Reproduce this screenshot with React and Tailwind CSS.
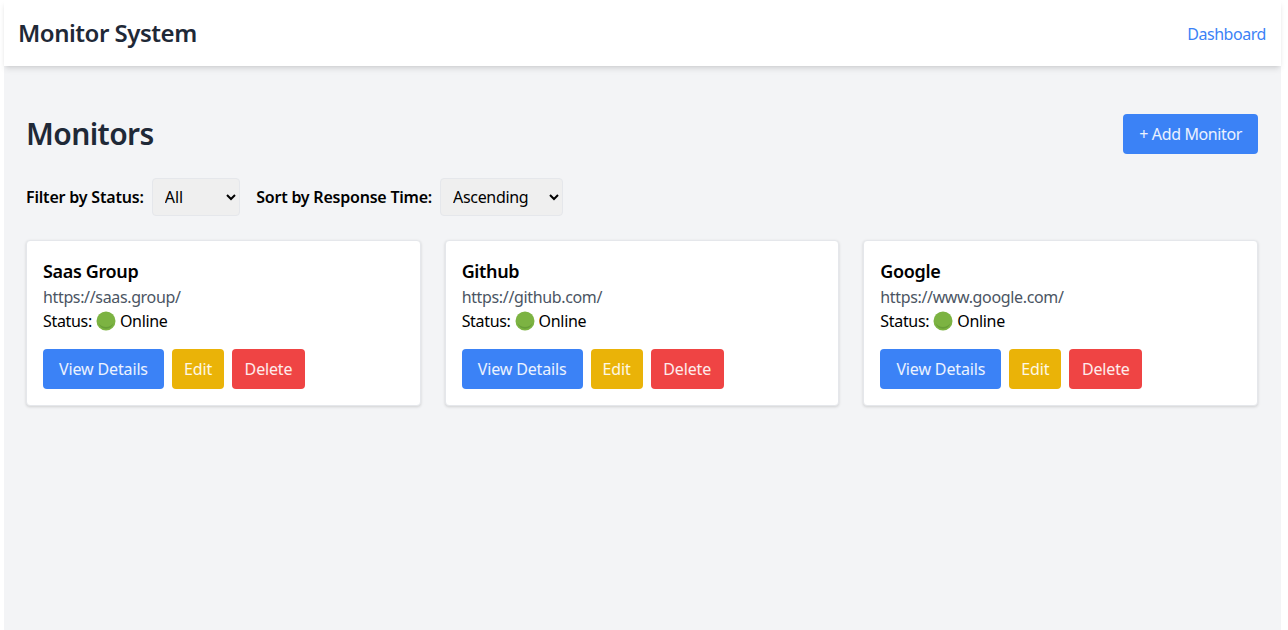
import React from "react";

const monitors = [
  { name: "Saas Group", url: "https://saas.group/" },
  { name: "Github", url: "https://github.com/" },
  { name: "Google", url: "https://www.google.com/" },
];

const StatusDot = () => (
  <svg width="20" height="20" viewBox="0 0 20 20" className="inline-block align-[-4px] ml-[4px] mr-[4px]">
    <circle cx="10" cy="10" r="9.5" fill="#7cb342" />
    <path d="M2.5 12a7.8 7.8 0 0 0 15 0a9 9 0 0 1-15 0z" fill="#689f38" />
  </svg>
);

const MonitorCard = ({ monitor }) => (
  <div className="bg-white rounded-[4px] border border-[#e5e7eb] shadow-[0_1px_3px_rgba(0,0,0,0.15)] p-4 h-[166px]">
    <h2 className="text-lg leading-[28px] font-semibold text-black tracking-[-0.02em]">{monitor.name}</h2>
    <p className="text-base leading-6 text-[#4b5563] tracking-[-0.022em]">{monitor.url}</p>
    <p className="text-base leading-6 text-black tracking-[-0.02em]">
      Status:
      <StatusDot />
      Online
    </p>
    <div className="flex gap-2 mt-4 tracking-[-0.009em]">
      <button className="h-10 w-[121px] rounded-[4px] bg-[#3b82f6] text-white/90 text-base">View Details</button>
      <button className="h-10 w-[52px] rounded-[4px] bg-[#eab308] text-white/90 text-base">Edit</button>
      <button className="h-10 w-[73px] rounded-[4px] bg-[#ef4444] text-white/90 text-base">Delete</button>
    </div>
  </div>
);

export default function App() {
  return (
    <div className="ml-1 mr-[7px] h-[630px] flex flex-col bg-[#f3f4f6] font-['Noto_Sans',sans-serif]">
      <nav className="h-[66px] shrink-0 bg-white shadow-md flex items-center justify-between pl-[14px] pr-[15px]">
        <h1 className="text-2xl font-semibold text-[#1f2937] tracking-[-0.02em]">Monitor System</h1>
        <a className="text-base text-[#3b82f6] tracking-[-0.028em] pt-[1px]">Dashboard</a>
      </nav>
      <main className="pl-[22px] pr-[23px] pt-12">
        <div className="flex items-center justify-between h-10 mb-6">
          <h2 className="text-3xl font-semibold text-[#1f2937] tracking-[-0.02em]">Monitors</h2>
          <button className="h-10 px-4 rounded-[4px] bg-[#3b82f6] text-white/90 text-base tracking-[-0.024em]">+ Add Monitor</button>
        </div>
        <div className="flex items-center gap-2 h-[38px] mb-6">
          <label className="text-base font-semibold text-black tracking-[-0.012em]">Filter by Status:</label>
          <select className="w-[88px] h-[38px] px-2 rounded-[4px] border border-[#e5e7eb] bg-[#efefef] text-base text-black">
            <option>All</option>
          </select>
          <label className="text-base font-semibold text-black ml-[8.6px] tracking-[-0.014em]">Sort by Response Time:</label>
          <select className="w-[123px] h-[38px] px-2 rounded-[4px] border border-[#e5e7eb] bg-[#efefef] text-base text-black tracking-[-0.02em]">
            <option>Ascending</option>
          </select>
        </div>
        <div className="grid grid-cols-3 gap-6">
          {monitors.map((monitor) => (
            <MonitorCard key={monitor.name} monitor={monitor} />
          ))}
        </div>
      </main>
    </div>
  );
}
